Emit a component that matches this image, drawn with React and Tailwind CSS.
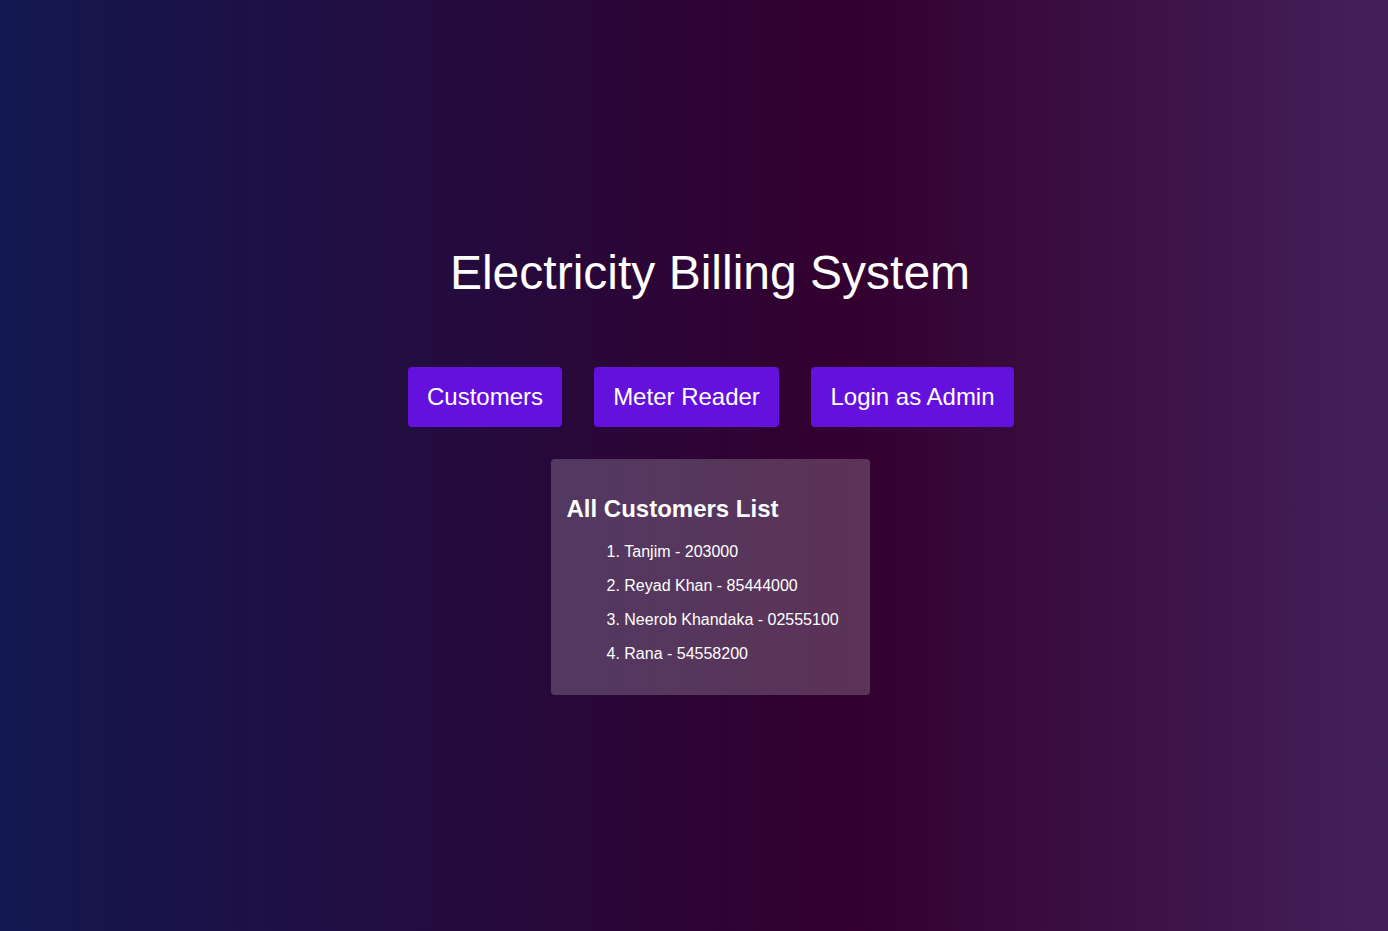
const customers = [
  { name: 'Tanjim', meter: '203000' },
  { name: 'Reyad Khan', meter: '85444000' },
  { name: 'Neerob Khandaka', meter: '02555100' },
  { name: 'Rana', meter: '54558200' },
];

const App = () => {
  return (
    <div className="min-h-screen w-full bg-[linear-gradient(to_right,#131850_0%,#33002f_61%,#44205a_100%)] font-['Liberation_Sans',Arial,sans-serif] text-white">
      <div className="flex flex-col items-center pl-8 pt-[245px]">
        <h1 className="text-[48px] leading-[55px] font-normal">Electricity Billing System</h1>

        <div className="mt-[67px] ml-[2px] flex gap-8">
          <button className="h-[60px] w-[154px] rounded bg-[#6511dd] text-2xl text-white">Customers</button>
          <button className="h-[60px] w-[185px] rounded bg-[#6511dd] text-2xl text-white">Meter Reader</button>
          <button className="h-[60px] w-[203px] rounded bg-[#6511dd] text-2xl text-white">Login as Admin</button>
        </div>

        <div className="mt-8 w-[319px] rounded bg-white/20 px-4 pt-4 pb-4">
          <h2 className="mt-5 mb-5 text-2xl leading-[28px] font-bold">All Customers List</h2>
          <ol className="flex list-inside list-decimal flex-col gap-4 pb-4 pl-10 text-base leading-[18px]">
            {customers.map((c) => (
              <li key={c.name}>
                {c.name} - {c.meter}
              </li>
            ))}
          </ol>
        </div>
      </div>
    </div>
  );
};

export default App;
